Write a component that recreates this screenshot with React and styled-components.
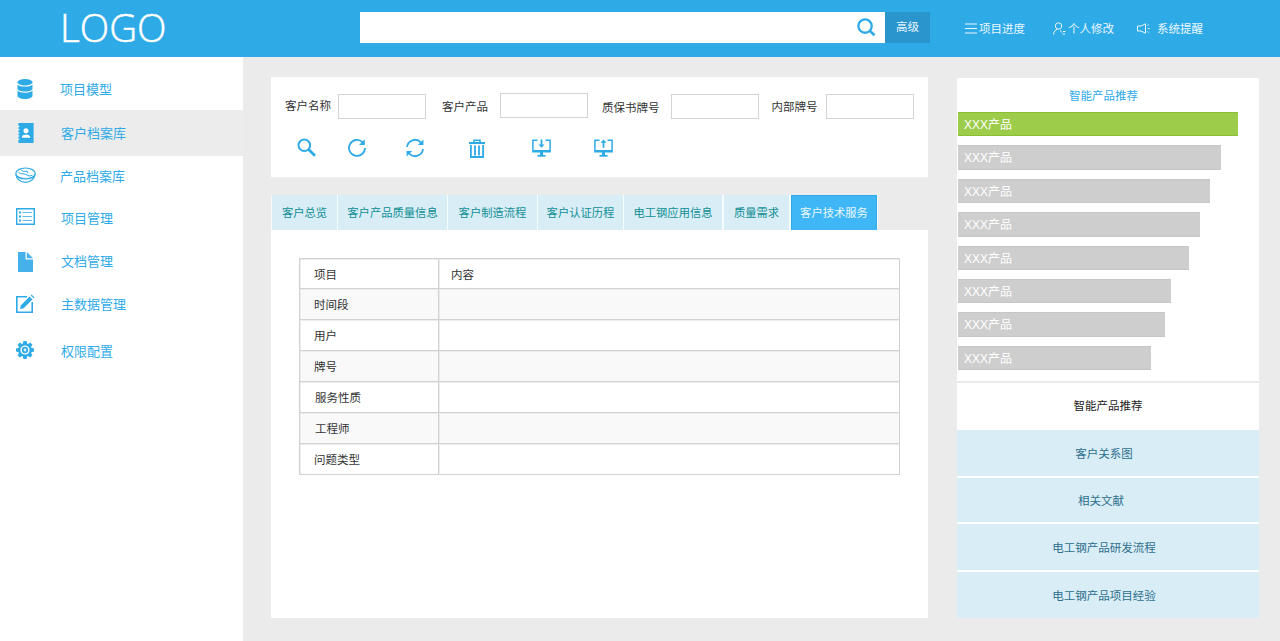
import React from 'react'
import styled, { createGlobalStyle } from 'styled-components'

const FONT = '"Liberation Sans", "Noto Sans CJK SC", sans-serif'
const BLUE = '#2eaae7'

const GlobalStyle = createGlobalStyle`
  html, body {
    margin: 0;
    height: 100%;
    background: #ebebeb;
    font-family: ${FONT};
  }
  * { box-sizing: border-box; }
`

const Page = styled.div`
  width: 1280px;
  height: 641px;
  overflow: hidden;
  display: flex;
  flex-direction: column;
`

const Header = styled.header`
  height: 57px;
  flex: none;
  background: ${BLUE};
  display: flex;
  align-items: center;
  padding-left: 60px;
`

const Logo = styled.div`
  width: 300px;
  color: #fff;
  font-family: "Open Sans", sans-serif;
  font-weight: 300;
  font-size: 38.5px;
  line-height: 54px;
  margin-bottom: 3px;
  -webkit-text-stroke: 0.5px #fff;
`

const SearchBox = styled.div`
  width: 525px;
  height: 31px;
  margin-bottom: 2px;
  background: #fff;
  display: flex;
  align-items: center;
  justify-content: flex-end;
  padding-right: 8px;
`

const SearchButton = styled.div`
  width: 45px;
  height: 31px;
  margin-bottom: 2px;
  background: #2a94cc;
  color: #e8f6fd;
  font-size: 11.5px;
  padding-bottom: 3px;
  display: flex;
  align-items: center;
  justify-content: center;
`

const HeaderNav = styled.nav`
  display: flex;
  align-items: center;
  margin-left: 35px;
  margin-bottom: 1px;
  color: #eaf7fe;
  font-size: 11.5px;
`

const HeaderLink = styled.div`
  display: flex;
  align-items: center;
  gap: ${p => p.$gap}px;
  margin-right: ${p => p.$after}px;
`

const Body = styled.div`
  flex: 1;
  display: flex;
  min-height: 0;
`

const Sidebar = styled.aside`
  width: 243px;
  flex: none;
  background: #fff;
  padding-top: 11px;
`

const SideItem = styled.div`
  height: ${p => p.$h}px;
  display: flex;
  align-items: center;
  background: ${p => (p.$active ? '#ececec' : 'transparent')};
  color: ${BLUE};
  font-size: 13px;
  padding-left: 13px;
`

const SideIcon = styled.span`
  width: 24px;
  height: 24px;
  display: flex;
  align-items: center;
  justify-content: center;
  margin-right: ${p => p.$gap}px;
  margin-bottom: ${p => p.$lift || 0}px;
`

const SideLabel = styled.span`
  margin-bottom: 2px;
`

const Main = styled.main`
  width: 657px;
  flex: none;
  margin: 20px 0 23px 28px;
  display: flex;
  flex-direction: column;
`

const FilterPanel = styled.section`
  height: 100px;
  background: #fff;
  padding: 16px 0 0 14px;
`

const FilterRow = styled.div`
  display: flex;
  align-items: center;
  height: 27px;
  color: #333;
  font-size: 11.5px;
`

const FilterLabel = styled.label`
  margin-left: ${p => p.$gap}px;
  margin-right: ${p => p.$after}px;
  margin-bottom: ${p => p.$lift}px;
  white-space: nowrap;
`

const FilterInput = styled.input`
  width: 88px;
  height: 25px;
  margin-bottom: ${p => p.$lift}px;
  border: 1px solid #d4d4d4;
  background: #fff;
  padding: 0;
  outline: none;
`

const ToolRow = styled.div`
  display: flex;
  align-items: center;
  margin-top: 17px;
  padding-left: 11px;
`

const ToolButton = styled.span`
  width: 22px;
  height: 22px;
  display: flex;
  align-items: center;
  justify-content: center;
  margin-right: ${p => p.$after}px;
`

const Tabs = styled.div`
  display: flex;
  margin-top: 18px;
  height: 35px;
  padding-left: 1px;
`

const Tab = styled.div`
  width: ${p => p.$w}px;
  margin-right: ${p => p.$after}px;
  padding-bottom: 2px;
  display: flex;
  align-items: center;
  justify-content: center;
  font-size: 11.3px;
  color: ${p => (p.$active ? '#eaf8ff' : '#0f8f94')};
  background: ${p => (p.$active ? '#3fb7f6' : '#d9edf7')};
  border: 1px solid ${p => (p.$active ? '#2eaae7' : '#d9edf7')};
  border-bottom: none;
  box-shadow: 1px 0 0 #f6fbfe, -1px 0 0 #f6fbfe;
`

const TabPanel = styled.section`
  flex: 1;
  background: #fff;
  padding: 28px 28px 0;
`

const InfoTable = styled.table`
  width: 601px;
  border-collapse: collapse;
  table-layout: fixed;
  font-size: 11.5px;
  color: #333;
`

const InfoRow = styled.tr`
  height: ${p => p.$h}px;
  background: ${p => (p.$odd ? '#f9f9f9' : '#fff')};
`

const InfoCell = styled.td`
  border: 1px solid #d2d2d2;
  box-shadow: inset 1px 1px 0 #ececec;
  padding: 0 0 0 ${p => p.$pad}px;
`

const RightPanel = styled.aside`
  width: 302px;
  flex: none;
  margin: 21px 0 23px 29px;
  background: #fff;
  display: flex;
  flex-direction: column;
`

const RankTitle = styled.h3`
  margin: 0;
  height: 34px;
  padding: 11px 9px 0 0;
  text-align: center;
  color: ${BLUE};
  font-size: 11.5px;
  font-weight: 400;
  line-height: 14px;
`

const RankList = styled.div`
  display: flex;
  flex-direction: column;
  gap: 9px;
  height: 271px;
  padding-left: 1px;
  border-bottom: 2px solid #ebebeb;
`

const RankBar = styled.div`
  height: 24.4px;
  flex: none;
  background: ${p => (p.$top ? '#9ccc4a' : '#cecece')};
  border: 1px solid ${p => (p.$top ? '#8bc034' : '#c6c6c6')};
  border-left: none;
  border-right: none;
  color: #fff;
  font-size: 12px;
  line-height: 24px;
  padding-left: 6px;
`

const LinkList = styled.div`
  flex: 1;
  display: flex;
  flex-direction: column;
`

const LinkItem = styled.div`
  height: ${p => p.$h}px;
  flex: none;
  display: flex;
  align-items: center;
  justify-content: center;
  padding: 0 ${p => p.$shift}px ${p => (p.$plain ? 2 : 0)}px 0;
  font-size: 11.5px;
  color: ${p => (p.$plain ? '#222' : '#2c6f8d')};
  background: ${p => (p.$plain ? '#fff' : '#d9edf6')};
  border-bottom: 2px solid #fff;

  &:last-child {
    border-bottom: none;
  }
`

const Svg = ({ w = 22, h = 22, vb = '0 0 22 22', color = BLUE, children }) => (
  <svg width={w} height={h} viewBox={vb} fill="none" stroke={color} strokeWidth="2">
    {children}
  </svg>
)

const IconSearchBig = () => (
  <Svg w={21} h={21}>
    <circle cx="9.5" cy="9.5" r="7" strokeWidth="2.4" />
    <path d="M14.8 14.8l4.6 4.4" strokeWidth="2.8" />
  </Svg>
)

const IconSearch = () => (
  <Svg w={20} h={20} vb="0 0 20 20">
    <circle cx="7.3" cy="7.3" r="5.8" strokeWidth="2" />
    <path d="M11.6 11.6l6.4 6.2" strokeWidth="2.8" />
  </Svg>
)

const IconRotate = () => (
  <Svg w={20} h={20} vb="0 0 20 20">
    <path d="M15.6 4.2A8 8 0 1 0 18 10" strokeWidth="1.8" />
    <path d="M17.8 1.2v5.800h-5.800z" fill={BLUE} stroke="none" />
  </Svg>
)

const IconRefresh = () => (
  <Svg w={20} h={20} vb="0 0 20 20">
    <path d="M2 9A8 8 0 0 1 15.800 4.400" strokeWidth="1.800" />
    <path d="M18 11A8 8 0 0 1 4.200 15.600" strokeWidth="1.800" />
    <path d="M18.400 1.400v5.600h-5.600zM1.600 18.600v-5.600h5.600z" fill={BLUE} stroke="none" />
  </Svg>
)

const IconTrash = () => (
  <Svg w={18} h={19} vb="0 0 18 19">
    <path d="M1 4h16" strokeWidth="2" />
    <path d="M6 3.500V1.200h6v2.300" strokeWidth="1.600" />
    <path d="M2.900 6v12h12.200V6" strokeWidth="1.800" />
    <path d="M7 6.500v10M11 6.500v10" strokeWidth="1.800" />
  </Svg>
)

const IconScreen = ({ up }) => (
  <Svg w={19} h={18} vb="0 0 19 18">
    <path d="M5.500 1.200H.900v11.600h17.200V1.200h-4.600" strokeWidth="1.500" />
    <path d="M1 12h17" strokeWidth="2" />
    <path d="M5.500 16.800h8" strokeWidth="1.800" />
    <path d="M8 13h3v3H8z" fill={BLUE} stroke="none" />
    {up ? (
      <path d="M9.500 0.500L6.400 3.800h2.200v5h1.800v-5h2.200z" fill={BLUE} stroke="none" />
    ) : (
      <path d="M9.500 8.800L6.400 5.400h2.200V0.500h1.800v4.900h2.200z" fill={BLUE} stroke="none" />
    )}
  </Svg>
)

const IconDatabase = () => (
  <Svg w={16} h={20} vb="0 0 16 20" color="none">
    <ellipse cx="8" cy="3.200" rx="7.500" ry="3.200" fill={BLUE} />
    <path
      fill={BLUE}
      d="M.5 5.400C1.800 6.900 4.700 7.600 8 7.600s6.200-.7 7.500-2.200V9.400c0 1.700-3.300 3.100-7.500 3.100S.5 11.100.5 9.400z"
    />
    <path
      fill={BLUE}
      d="M.5 11.600c1.300 1.500 4.200 2.200 7.500 2.200s6.200-.7 7.500-2.200V16.800c0 1.700-3.300 3.200-7.500 3.200S.5 18.500.5 16.800z"
    />
  </Svg>
)

const IconContacts = () => (
  <Svg w={17} h={20} vb="0 0 17 20" color="none">
    <path fill={BLUE} d="M1.400 0H16.600v20H1.400z" />
    <path fill="#fff" d="M.4 3h2v1H.4zM.4 6.200h2v1h-2zM.4 9.400h2v1h-2zM.4 12.600h2v1h-2zM.4 15.800h2v1h-2z" />
    <circle cx="9" cy="7.800" r="2.500" fill="#fff" />
    <path fill="#fff" d="M4.800 14.800c0-2.400 1.900-3.400 4.200-3.400s4.200 1 4.200 3.400z" />
  </Svg>
)

const IconDish = () => (
  <Svg w={21} h={16} vb="0 0 21 16">
    <ellipse cx="10.500" cy="6.500" rx="9.700" ry="5.500" strokeWidth="1.200" />
    <path d="M.8 7.500c.6 4.200 4.800 7.800 9.700 7.800s9.100-3.600 9.700-7.800" strokeWidth="1.200" />
    <path d="M3.500 5c2 3 5 1 7.500 2.500s4.500 2 6.500.5M6 2.500c1 2 3 2.500 6 1.500l1 2.500" strokeWidth="1" />
    <path d="M3 9.500c3 2.200 11 2.600 15 .5" strokeWidth="1" opacity="0.7" />
  </Svg>
)

const IconList = () => (
  <Svg w={19} h={17} vb="0 0 19 17">
    <path d="M.7.7h17.600v15.600H.7z" strokeWidth="1.400" />
    <path d="M3 4.500h2M3 8.500h2M3 12.500h2" strokeWidth="1.800" />
    <path d="M6.500 4.500H16M6.500 8.500H16M6.500 12.500H16" strokeWidth="1" opacity="0.75" />
  </Svg>
)

const IconFile = () => (
  <Svg w={15} h={20} vb="0 0 15 20" color="none">
    <path fill="#45b0ea" d="M0 0h7.500v7.500H15V20H0z" />
    <path fill="#45b0ea" d="M8.800 0L15 6.200H8.800z" />
  </Svg>
)

const IconEdit = () => (
  <Svg w={19} h={19} vb="0 0 19 19">
    <path d="M11 2.800H.8v15.400h15.400V8" strokeWidth="1.600" />
    <path d="M4 15l.8-3.600L13.600 2.600l2.800 2.800L7.600 14.200z" fill={BLUE} stroke="none" />
    <path d="M14.800 1.400l.8-.8 2.800 2.800-.8.8z" fill={BLUE} stroke="none" />
  </Svg>
)

const IconGear = () => (
  <Svg w={18} h={18} vb="0 0 18 18" color="none">
    {[0, 45, 90, 135, 180, 225, 270, 315].map(a => (
      <path key={a} d="M7.400 0h3.200l.6 3H6.800z" fill={BLUE} transform={`rotate(${a} 9 9)`} />
    ))}
    <circle cx="9" cy="9" r="6.800" fill={BLUE} />
    <circle cx="9" cy="9" r="4.600" fill="#fff" />
    <circle cx="9" cy="9" r="3.200" fill={BLUE} />
    <circle cx="9" cy="9" r="1.400" fill="#dff2fc" />
  </Svg>
)

const IconMenu = () => (
  <Svg w={12} h={11} vb="0 0 12 11" color="#eaf7fe">
    <path d="M0 1h12M0 5.500h12M0 10h12" strokeWidth="1" />
  </Svg>
)

const IconUser = () => (
  <Svg w={13} h={13} vb="0 0 13 13" color="#eaf7fe">
    <circle cx="5.500" cy="4" r="3.200" strokeWidth="1" />
    <path d="M.6 12.500c0-3 2-4.800 4-5.200M7 8.500c1 .6 1.500 1.200 1.800 2M10 9.500h2.500M9.500 12h2.500" strokeWidth="1" />
  </Svg>
)

const IconSpeaker = () => (
  <Svg w={14} h={11} vb="0 0 14 11" color="#eaf7fe">
    <path d="M.5 3h3.500L8.500.8v9.400L4 8H.5z" strokeWidth="1" />
    <path d="M10.500 2.500l1.200-1M10.800 5.500h1.800M10.500 8.500l1.200 1" strokeWidth="1" />
  </Svg>
)

const sideItems = [
  { label: '项目模型', icon: <IconDatabase />, h: 42, gap: 23 },
  { label: '客户档案库', icon: <IconContacts />, h: 46, active: true, gap: 24 },
  { label: '产品档案库', icon: <IconDish />, h: 40, gap: 23, lift: 2 },
  { label: '项目管理', icon: <IconList />, h: 44, gap: 24, lift: 3 },
  { label: '文档管理', icon: <IconFile />, h: 43, gap: 24 },
  { label: '主数据管理', icon: <IconEdit />, h: 43, gap: 24, lift: 2 },
  { label: '权限配置', icon: <IconGear />, h: 51, gap: 24, lift: 3 },
]

const filters = [
  { label: '客户名称', gap: 0, after: 7, lift: 3 },
  { label: '客户产品', gap: 16, after: 12, lift: 1, inputLift: 2 },
  { label: '质保书牌号', gap: 14, after: 11, lift: 0 },
  { label: '内部牌号', gap: 13, after: 8, lift: 1 },
]

const tools = [
  { icon: <IconSearch />, after: 28 },
  { icon: <IconRotate />, after: 36 },
  { icon: <IconRefresh />, after: 40 },
  { icon: <IconTrash />, after: 42 },
  { icon: <IconScreen />, after: 40 },
  { icon: <IconScreen up />, after: 0 },
]

const tabs = [
  { label: '客户总览', w: 65, after: 1 },
  { label: '客户产品质量信息', w: 109, after: 1 },
  { label: '客户制造流程', w: 89, after: 1 },
  { label: '客户认证历程', w: 85, after: 1 },
  { label: '电工钢应用信息', w: 98, after: 2 },
  { label: '质量需求', w: 65, after: 2 },
  { label: '客户技术服务', w: 86, after: 0, active: true },
]

const rows = [
  { name: '项目', value: '内容', h: 30, pad: 14 },
  { name: '时间段', h: 31, pad: 14 },
  { name: '用户', h: 31, pad: 14 },
  { name: '牌号', h: 31, pad: 14 },
  { name: '服务性质', h: 31, pad: 15 },
  { name: '工程师', h: 31, pad: 15 },
  { name: '问题类型', h: 31, pad: 14 },
]

const bars = [
  { width: 280, top: true },
  { width: 263 },
  { width: 252 },
  { width: 242 },
  { width: 231 },
  { width: 213 },
  { width: 207 },
  { width: 193 },
]

const links = [
  { label: '智能产品推荐', h: 47, plain: true, shift: 0 },
  { label: '客户关系图', h: 48, shift: 8 },
  { label: '相关文献', h: 46, shift: 14 },
  { label: '电工钢产品研发流程', h: 48, shift: 8 },
  { label: '电工钢产品项目经验', h: 46, shift: 8 },
]

export default function App() {
  return (
    <Page>
      <GlobalStyle />
      <Header>
        <Logo>LOGO</Logo>
        <SearchBox>
          <IconSearchBig />
        </SearchBox>
        <SearchButton>高级</SearchButton>
        <HeaderNav>
          <HeaderLink $gap={2} $after={28}>
            <IconMenu />
            项目进度
          </HeaderLink>
          <HeaderLink $gap={2} $after={23}>
            <IconUser />
            个人修改
          </HeaderLink>
          <HeaderLink $gap={6} $after={0}>
            <IconSpeaker />
            系统提醒
          </HeaderLink>
        </HeaderNav>
      </Header>
      <Body>
        <Sidebar>
          {sideItems.map(item => (
            <SideItem key={item.label} $h={item.h} $active={item.active}>
              <SideIcon $gap={item.gap} $lift={item.lift}>{item.icon}</SideIcon>
              <SideLabel>{item.label}</SideLabel>
            </SideItem>
          ))}
        </Sidebar>
        <Main>
          <FilterPanel>
            <FilterRow>
              {filters.map(f => (
                <React.Fragment key={f.label}>
                  <FilterLabel $gap={f.gap} $after={f.after} $lift={f.lift}>
                    {f.label}
                  </FilterLabel>
                  <FilterInput $lift={f.inputLift || 0} />
                </React.Fragment>
              ))}
            </FilterRow>
            <ToolRow>
              {tools.map((t, i) => (
                <ToolButton key={i} $after={t.after}>
                  {t.icon}
                </ToolButton>
              ))}
            </ToolRow>
          </FilterPanel>
          <Tabs>
            {tabs.map(t => (
              <Tab key={t.label} $w={t.w} $after={t.after} $active={t.active}>
                {t.label}
              </Tab>
            ))}
          </Tabs>
          <TabPanel>
            <InfoTable>
              <colgroup>
                <col style={{ width: 139 }} />
                <col />
              </colgroup>
              <tbody>
                {rows.map((r, i) => (
                  <InfoRow key={r.name} $h={r.h} $odd={i % 2 === 1}>
                    <InfoCell $pad={r.pad}>{r.name}</InfoCell>
                    <InfoCell $pad={12}>{r.value}</InfoCell>
                  </InfoRow>
                ))}
              </tbody>
            </InfoTable>
          </TabPanel>
        </Main>
        <RightPanel>
          <RankTitle>智能产品推荐</RankTitle>
          <RankList>
            {bars.map((b, i) => (
              <RankBar key={i} $top={b.top} style={{ width: b.width }}>
                XXX产品
              </RankBar>
            ))}
          </RankList>
          <LinkList>
            {links.map(l => (
              <LinkItem key={l.label} $h={l.h} $plain={l.plain} $shift={l.shift}>
                {l.label}
              </LinkItem>
            ))}
          </LinkList>
        </RightPanel>
      </Body>
    </Page>
  )
}
